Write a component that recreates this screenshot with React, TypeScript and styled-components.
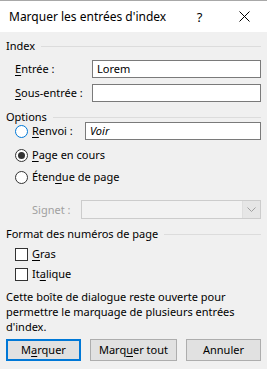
import * as React from 'react'
import styled, { createGlobalStyle } from 'styled-components'

const GlobalStyle = createGlobalStyle`
  html, body {
    margin: 0;
    padding: 0;
    background: #f0f0f0;
  }
  body {
    font-family: "Noto Sans", "Open Sans", sans-serif;
    font-size: 11px;
    line-height: 16px;
    color: #000;
  }
`

const Window = styled.div`
  width: 267px;
  height: 369px;
  display: flex;
  flex-direction: column;
  background: #f0f0f0;
  overflow: hidden;
`

const TitleBar = styled.div`
  height: 31px;
  flex-shrink: 0;
  display: flex;
  align-items: center;
  background: #fff;
  border-top: 1px solid #a8a8a8;
  padding-left: 9px;
`

const Title = styled.span`
  flex: 1;
  font-size: 12px;
`

const TitleButton = styled.span`
  width: 45px;
  height: 31px;
  display: flex;
  align-items: center;
  justify-content: center;
  font-size: 13px;
`

const Body = styled.div`
  flex: 1;
  display: flex;
  flex-direction: column;
  padding: 0 6px;
`

const GroupHeader = styled.div<{ $top: number }>`
  display: flex;
  align-items: center;
  gap: 6px;
  height: 14px;
  line-height: 14px;
  margin-top: ${p => p.$top}px;
  &::after {
    content: '';
    flex: 1;
    height: 1px;
    background: #dcdcdc;
  }
`

const FieldRow = styled.div<{ $top: number; $indent: number }>`
  display: flex;
  align-items: center;
  min-height: 16px;
  margin-top: ${p => p.$top}px;
  padding-left: ${p => p.$indent}px;
`

const Label = styled.span<{ $width: number; $disabled?: boolean }>`
  width: ${p => p.$width}px;
  flex-shrink: 0;
  color: ${p => (p.$disabled ? '#a0a0a0' : '#000')};
`

const Key = styled.u`
  text-decoration: underline;
  text-underline-offset: 2px;
`

const TextBox = styled.div<{ $italic?: boolean }>`
  flex: 1;
  height: 18px;
  box-sizing: border-box;
  border: 1px solid #7a7a7a;
  background: #fff;
  padding: 0 4px;
  display: flex;
  align-items: center;
  font-style: ${p => (p.$italic ? 'italic' : 'normal')};
`

const Select = styled.div`
  flex: 1;
  height: 19px;
  box-sizing: border-box;
  border: 1px solid #cccccc;
  background: #f2f2f2;
  display: flex;
  justify-content: flex-end;
`

const SelectArrow = styled.div`
  width: 17px;
  background: #e6e6e6;
  border-left: 1px solid #dedede;
  display: flex;
  align-items: center;
  justify-content: center;
`

const Radio = styled.span<{ $checked?: boolean; $hot?: boolean }>`
  width: 13px;
  height: 13px;
  box-sizing: border-box;
  border-radius: 50%;
  border: 1px solid ${p => (p.$hot ? '#0078d7' : '#333')};
  background: #fff;
  display: flex;
  align-items: center;
  justify-content: center;
  margin-right: 4px;
  flex-shrink: 0;
  &::after {
    content: '';
    display: ${p => (p.$checked ? 'block' : 'none')};
    width: 7px;
    height: 7px;
    border-radius: 50%;
    background: #333;
  }
`

const Check = styled.span`
  width: 13px;
  height: 13px;
  box-sizing: border-box;
  border: 1px solid #333;
  background: #fff;
  margin-right: 4px;
  flex-shrink: 0;
`

const Note = styled.p`
  margin: 7px 0 0;
  line-height: 15px;
`

const ButtonRow = styled.div`
  display: flex;
  margin-top: 5px;
`

const Button = styled.div<{ $width: number; $gap: number; $default?: boolean }>`
  width: ${p => p.$width}px;
  height: 22px;
  box-sizing: border-box;
  margin-left: ${p => p.$gap}px;
  background: #e1e1e1;
  border: ${p => (p.$default ? '2px solid #0078d7' : '1px solid #adadad')};
  display: flex;
  align-items: center;
  justify-content: center;
`

export default function App() {
  return (
    <>
      <GlobalStyle />
      <Window>
        <TitleBar>
          <Title>Marquer les entrées d'index</Title>
          <TitleButton>?</TitleButton>
          <TitleButton>
            <svg width="11" height="11" viewBox="0 0 11 11">
              <path d="M0.5 0.5 L10.5 10.5 M10.5 0.5 L0.5 10.5" stroke="#000" strokeWidth="1" />
            </svg>
          </TitleButton>
        </TitleBar>
        <Body>
          <GroupHeader $top={7}>Index</GroupHeader>
          <FieldRow $top={7} $indent={9}>
            <Label $width={77}><Key>E</Key>ntrée :</Label>
            <TextBox>Lorem</TextBox>
          </FieldRow>
          <FieldRow $top={6} $indent={9}>
            <Label $width={77}><Key>S</Key>ous-entrée :</Label>
            <TextBox />
          </FieldRow>

          <GroupHeader $top={8}>Options</GroupHeader>
          <FieldRow $top={-2} $indent={9}>
            <Radio $hot />
            <Label $width={53}><Key>R</Key>envoi :</Label>
            <TextBox $italic>Voir</TextBox>
          </FieldRow>
          <FieldRow $top={7} $indent={9}>
            <Radio $checked />
            <span><Key>P</Key>age en cours</span>
          </FieldRow>
          <FieldRow $top={6} $indent={9}>
            <Radio />
            <span>Éten<Key>d</Key>ue de page</span>
          </FieldRow>
          <FieldRow $top={15} $indent={26}>
            <Label $width={49} $disabled>Signet :</Label>
            <Select>
              <SelectArrow>
                <svg width="9" height="5" viewBox="0 0 9 5">
                  <path d="M0.5 0.5 L4.5 4.5 L8.5 0.5" fill="none" stroke="#a0a0a0" strokeWidth="1" />
                </svg>
              </SelectArrow>
            </Select>
          </FieldRow>

          <GroupHeader $top={8}>Format des numéros de page</GroupHeader>
          <FieldRow $top={5} $indent={9}>
            <Check />
            <span><Key>G</Key>ras</span>
          </FieldRow>
          <FieldRow $top={4} $indent={9}>
            <Check />
            <span>It<Key>a</Key>lique</span>
          </FieldRow>

          <Note>
            Cette boîte de dialogue reste ouverte pour<br />
            permettre le marquage de plusieurs entrées<br />
            d'index.
          </Note>

          <ButtonRow>
            <Button $width={75} $gap={0} $default>M<Key>a</Key>rquer</Button>
            <Button $width={87} $gap={9}>Marq<Key>u</Key>er tout</Button>
            <Button $width={75} $gap={9}>Annuler</Button>
          </ButtonRow>
        </Body>
      </Window>
    </>
  )
}
